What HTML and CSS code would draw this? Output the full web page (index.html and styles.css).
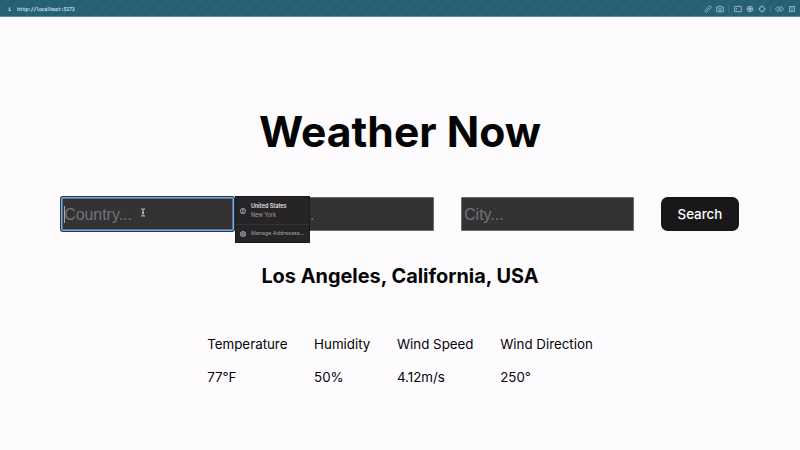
FILE: index.html
```html
<!DOCTYPE html>
<html lang="en">
<head>
<meta charset="utf-8">
<title>Weather Now</title>
<link rel="stylesheet" href="styles.css">
</head>
<body>
<header class="bar">
  <span class="info">i</span><span class="url">http://localhost:5173</span>
  <div class="tools">
    <svg viewBox="0 0 8 8"><path d="M3.1 4.9 L4.9 3.1 M3.3 2.9 L4.9 1.3 Q5.8.5 6.7 1.3 T6.7 3.1 L5.1 4.7 M2.9 3.3 L1.3 4.9 Q.5 5.8 1.3 6.7 T3.1 6.7 L4.7 5.1"/></svg>
    <svg viewBox="0 0 8 8"><path d="M.6 2 H2.2 L2.8 1.1 H5.2 L5.8 2 H7.4 V6.8 H.6 Z"/><circle cx="4" cy="4.3" r="1.4"/></svg>
    <i class="rule"></i>
    <svg viewBox="0 0 8 8"><path d="M.7 1.4 H7.3 V6.7 H.7 Z M2 3 L3 3.8 L2 4.6"/></svg>
    <svg viewBox="0 0 8 8"><circle cx="4" cy="4" r="2.8"/><circle cx="4" cy="4" r="1.2"/><path d="M4 1.2 V6.8 M1.2 4 H6.8"/></svg>
    <svg viewBox="0 0 8 8"><circle cx="4" cy="4" r="2.5"/><path d="M4 .5 V2.3 M4 5.7 V7.5 M.5 4 H2.3 M5.7 4 H7.5"/></svg>
    <i class="rule"></i>
    <svg class="wide" viewBox="0 0 9 8"><path d="M2.9 1.6 L.4 4 L2.9 6.4 L4.5 5.2 L6.1 6.4 L8.6 4 L6.1 1.6 L4.5 2.8 Z M3 4 H6"/></svg>
    <svg viewBox="0 0 8 8"><path d="M1.5 1.5 H6.5 V6.5 H1.5 Z M4 1.5 V6.5"/></svg>
  </div>
</header>
<main>
  <h1>Weather Now</h1>
  <form class="search">
    <div class="field focused"><span class="caret"></span>Country...
      <svg class="ibeam" viewBox="0 0 6 9"><path d="M1 1 H2.3 L3 1.6 L3.7 1 H5 M3 1.6 V7.4 M1 8 H2.3 L3 7.4 L3.7 8 H5 M2 4.5 H4"/></svg>
      <div class="menu">
        <div class="entry">
          <svg viewBox="0 0 8 8"><circle cx="4" cy="4" r="2.7"/><circle cx="4" cy="3.2" r="1"/><path d="M2.2 6 Q4 4.1 5.8 6"/></svg>
          <div><b>United States</b><span>New York</span></div>
        </div>
        <div class="entry manage">
          <svg viewBox="0 0 8 8"><circle cx="4" cy="4" r="2.6"/><circle cx="4" cy="4" r="1"/><path d="M4 1 V3 M1.4 5.5 L3.1 4.5 M6.6 5.5 L4.9 4.5 M1.4 2.5 L3.1 3.5 M6.6 2.5 L4.9 3.5 M4 5 V7"/></svg>
          <span>Manage Addresses...</span>
        </div>
      </div>
    </div>
    <div class="field">State...</div>
    <div class="field">City...</div>
    <button type="button">Search</button>
  </form>
  <h2>Los Angeles, California, USA</h2>
  <dl class="stats">
    <div><dt>Temperature</dt><dd>77°F</dd></div>
    <div><dt>Humidity</dt><dd>50%</dd></div>
    <div><dt>Wind Speed</dt><dd>4.12m/s</dd></div>
    <div><dt>Wind Direction</dt><dd>250°</dd></div>
  </dl>
</main>
</body>
</html>
```
FILE: styles.css
```css
* { box-sizing: border-box; }
body {
  margin: 0;
  height: 450px;
  overflow: hidden;
  background: #fdfbfe;
  color: #050505;
  font: 13.33px/20px Inter, sans-serif;
}
svg { fill: none; stroke: currentColor; stroke-width: .8; flex: none; }
.bar {
  display: flex;
  align-items: center;
  height: 17px;
  padding: 1px 4px 0 8px;
  border-bottom: 1px solid #5f8c9b;
  background: repeating-linear-gradient(135deg, #265f73 0 4px, #286277 4px 8px);
  color: #d5e4e9;
  font: 5px/16px "DejaVu Sans Mono", monospace;
}
.info { width: 9px; font-weight: bold; }
.url { letter-spacing: -.27px; -webkit-text-stroke: .15px currentColor; }
.tools { display: flex; align-items: center; gap: 4px; margin-left: auto; color: #a9c6d0; }
.tools svg { width: 8px; height: 8px; }
.tools .wide { width: 9px; }
.rule { width: 1px; height: 8px; margin-right: .4px; background: #3a7185; }
h1 {
  margin: 90.5px 0 0;
  font-size: 42.67px;
  line-height: 48px;
  font-weight: 700;
  text-align: center;
}
.search { display: flex; justify-content: center; gap: 26.67px; margin-top: 41px; }
.field {
  position: relative;
  width: 173.3px;
  height: 34.5px;
  padding: 0 2.3px;
  border: 1px solid #6b696c;
  border-radius: 1px;
  background: #343235;
  color: #757376;
  font: 15.9px/33px "Liberation Sans", sans-serif;
}
.focused {
  border-color: #79aee8;
  box-shadow: inset 0 0 0 .5px #79aee8, 0 0 0 1px #26354a;
  border-radius: 2px;
}
.caret { position: absolute; left: 2px; top: 8px; width: 1px; height: 17px; background: #aaa8ab; }
.ibeam { position: absolute; left: 78px; top: 10px; width: 6px; height: 9px; color: #d0ced1; stroke-width: 1; }
.menu {
  position: absolute;
  z-index: 1;
  left: 173px;
  top: -1.5px;
  width: 75px;
  height: 46.5px;
  border: 1px solid #1b191c;
  background: #262427;
  color: #a5a3a6;
  font: 5.5px/9px Inter, sans-serif;
}
.entry { display: flex; align-items: center; gap: 4px; height: 27px; padding-left: 3px; }
.entry svg { width: 8px; height: 8px; }
.entry b, .entry span { display: block; white-space: nowrap; }
.entry b { color: #e2e0e3; font-weight: 600; }
.entry.manage { height: 18px; border-top: 1px solid #353336; font-size: 5.35px; }
button {
  width: 78.3px;
  height: 34.5px;
  padding: 0;
  border: 0;
  border-radius: 6.67px;
  background: #19171a;
  color: #fff;
  font: 500 13.33px/34px Inter, sans-serif;
}
h2 { margin: 32px 0 0; font-size: 19.9px; line-height: 26px; font-weight: 700; text-align: center; }
.stats { display: flex; justify-content: center; gap: 26.67px; margin: 45px 0 0; }
dt { margin-bottom: 13.33px; }
dd { margin: 0; }
```
